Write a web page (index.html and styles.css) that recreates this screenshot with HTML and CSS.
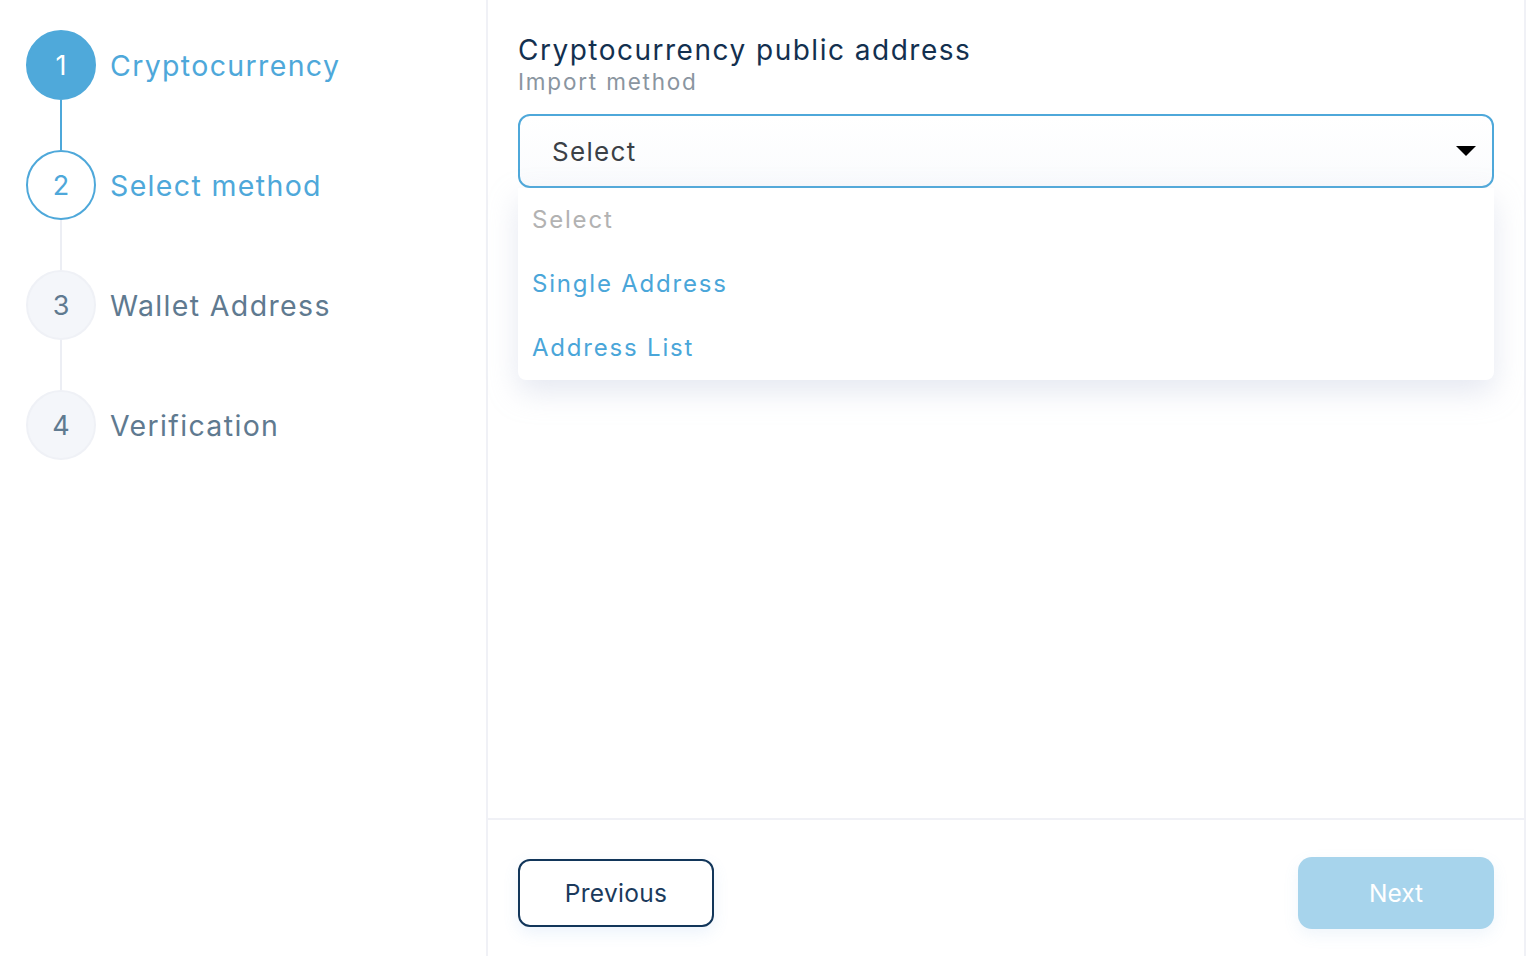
FILE: index.html
```html
<!DOCTYPE html>
<html>
<head>
<meta charset="utf-8">
<link rel="stylesheet" href="styles.css">
</head>
<body>
<div class="page">
  <aside class="steps">
    <div class="step active">
      <div class="num">1</div>
      <div class="label">Cryptocurrency</div>
    </div>
    <div class="conn conn-blue"></div>
    <div class="step current">
      <div class="num">2</div>
      <div class="label">Select method</div>
    </div>
    <div class="conn"></div>
    <div class="step">
      <div class="num">3</div>
      <div class="label">Wallet Address</div>
    </div>
    <div class="conn"></div>
    <div class="step">
      <div class="num">4</div>
      <div class="label">Verification</div>
    </div>
  </aside>
  <main class="panel">
    <section class="content">
      <h1 class="title">Cryptocurrency public address</h1>
      <div class="subtitle">Import method</div>
      <div class="select-wrap">
        <div class="select">
          <span class="select-value">Select</span>
          <svg class="caret" width="20" height="10" viewBox="0 0 20 10"><path d="M0 0 L20 0 L10 10 Z" fill="#000"/></svg>
        </div>
        <ul class="menu">
          <li class="opt placeholder">Select</li>
          <li class="opt">Single Address</li>
          <li class="opt">Address List</li>
        </ul>
      </div>
    </section>
    <footer class="footer">
      <button class="btn btn-prev">Previous</button>
      <button class="btn btn-next">Next</button>
    </footer>
  </main>
</div>
</body>
</html>
```
FILE: styles.css
```css
* { box-sizing: border-box; }
html, body { margin: 0; padding: 0; background: #fff; }
body { font-family: "Inter", "Open Sans", sans-serif; }
.page { display: flex; height: 956px; width: 1526px; }

.steps {
  width: 488px;
  border-right: 2px solid #f0f1f6;
  padding: 30px 0 0 26px;
  display: flex;
  flex-direction: column;
}
.step { display: flex; align-items: center; height: 70px; }
.num {
  width: 70px; height: 70px; border-radius: 50%;
  display: flex; align-items: center; justify-content: center;
  font-size: 27px; color: #5f7a90;
  background: #f4f6fa; border: 2px solid #eff1f6;
  flex-shrink: 0;
}
.label {
  margin-left: 14px;
  font-size: 28.5px;
  letter-spacing: 1.35px;
  color: #5f7a90;
}
.step.active .num { background: #4fa9da; border-color: #4fa9da; color: #fff; }
.step.active .label, .step.current .label { color: #4ea8da; }
.step.current .num { background: #fff; border-color: #4ea8da; color: #4ea8da; }
.conn { width: 2px; height: 50px; background: #eceef4; margin-left: 34px; }
.conn-blue { background: #4ea8da; }

.panel {
  flex: 1;
  border-right: 2px solid #f0f1f6;
  display: flex; flex-direction: column;
}
.content { flex: 1; padding: 32px 30px 0 30px; }
.title {
  margin: 0; font-weight: 400;
  font-size: 28px; line-height: 36px;
  letter-spacing: 1.5px;
  color: #13304f;
}
.subtitle {
  font-size: 22.5px; line-height: 28px; color: #8a95a0; letter-spacing: 1.8px;
  margin-top: 0;
}
.select-wrap { margin-top: 18px; position: relative; }
.select {
  height: 74px;
  border: 2px solid #4ea8da;
  border-radius: 12px;
  display: flex; align-items: center; justify-content: space-between;
  padding: 0 16px 0 32px;
  background: linear-gradient(#fff, #fafbfd);
}
.select-value { font-size: 26px; color: #3b4046; letter-spacing: 1.3px; }
.caret { display: block; }
.menu {
  position: absolute; left: 0; right: 0; top: 74px;
  margin: 0; padding: 0; list-style: none;
  background: #fff;
  border-radius: 0 0 8px 8px;
  box-shadow: 0 12px 30px rgba(180, 188, 215, 0.35);
  height: 192px;
}
.opt {
  height: 64px; line-height: 64px;
  padding-left: 14px;
  font-size: 24px; letter-spacing: 1.8px;
  color: #4aa6d9;
}
.opt.placeholder { color: #b2b2b2; }

.footer {
  height: 138px;
  border-top: 2px solid #f0f1f6;
  display: flex; align-items: center; justify-content: space-between;
  padding: 10px 30px 0 30px;
}
.btn {
  font-family: inherit;
  font-size: 24.5px;
  width: 196px;
  cursor: pointer;
}
.btn-prev {
  height: 68px;
  background: #fff;
  border: 2px solid #12365a;
  border-radius: 12px;
  color: #1b3a5c;
  letter-spacing: 0.3px;
  box-shadow: 0 6px 16px rgba(100, 160, 220, 0.12);
}
.btn-next {
  height: 72px;
  background: #a7d4ec;
  border: none;
  border-radius: 14px;
  color: #fff;
  box-shadow: 0 6px 16px rgba(100, 160, 220, 0.1);
}
```
